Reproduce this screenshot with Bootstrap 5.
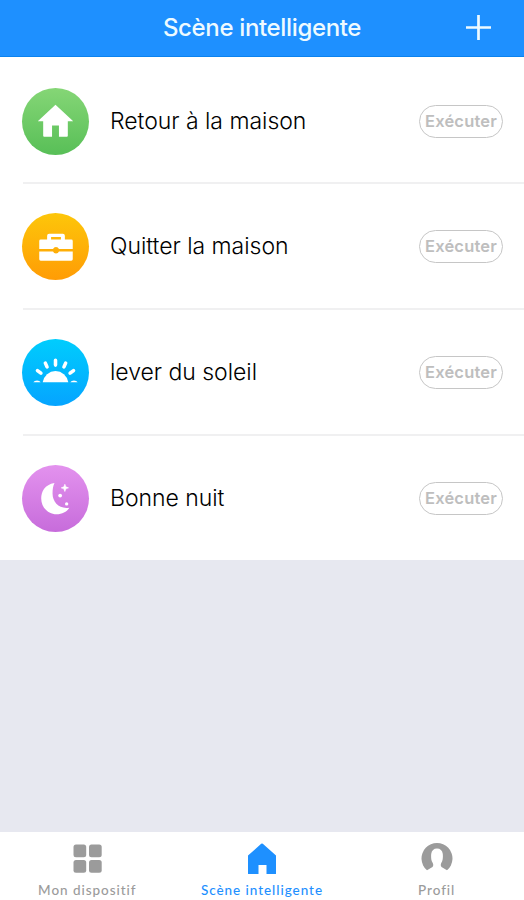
<!DOCTYPE html>
<html lang="fr">
<head>
<meta charset="utf-8">
<meta name="viewport" content="width=device-width, initial-scale=1">
<title>Scène intelligente</title>
<link href="https://cdn.jsdelivr.net/npm/bootstrap@5.3.0/dist/css/bootstrap.min.css" rel="stylesheet">
<style>
body { font-family: Inter, "Liberation Sans", sans-serif; background: #e7e8f0; }
.top-bar { height: 57px; background: #1e90ff; border-bottom: 1px solid #0b82ee; padding: 0 32px; }
.top-title { font-size: 24px; font-weight: 500; letter-spacing: -.35px; color: #eefaff; line-height: 1; }
.add-btn { right: 32px; top: 14px; }
.scene { height: 126px; padding: 3px 21px 0 21px; }
.scene:first-child { height: 125px; padding-top: 4px; }
.scene + .scene { background: linear-gradient(#f0f0f1, #f0f0f1) 23px 0 / 100% 2px no-repeat; }
.disc { width: 67px; height: 67px; margin-top: -1px; margin-left: .5px; }
.scene-name { font-size: 23px; font-weight: 300; color: #000; margin-left: 21.5px; line-height: 1; letter-spacing: -.03px; white-space: nowrap; }
.run-btn { width: 84px; height: 33px; padding: 0; border: 1px solid #c6c6c6; color: #bebebe; font-size: 16.5px; font-weight: 600; letter-spacing: .2px; line-height: 1; }
.disc-home { background: linear-gradient(#85d676, #58bf57); }
.disc-case { background: linear-gradient(#fdc60a, #ff9c05); }
.disc-sun { background: linear-gradient(#00cdfd, #05a4ff); }
.disc-moon { background: linear-gradient(#e392ee, #c76cdb); }
.tab-bar { height: 68px; }
.tab-item { width: 174.66px; padding-top: 10px; color: #9b9b9b; text-decoration: none; }
.tab-item.active { color: #1e90ff; }
.tab-text { font-size: 13.5px; font-weight: 500; line-height: 16px; margin-top: 8px; white-space: nowrap; font-family: Lato, Inter, sans-serif; letter-spacing: .95px; }
</style>
</head>
<body class="d-flex flex-column vh-100 overflow-hidden">
<header class="top-bar position-relative d-flex align-items-center justify-content-center flex-shrink-0">
  <h1 class="top-title m-0">Scène intelligente</h1>
  <button class="add-btn btn p-0 border-0 position-absolute lh-1" aria-label="Ajouter">
    <svg class="d-block" width="27" height="27" viewBox="0 0 27 27" fill="none" stroke="#eefaff" stroke-width="2.7"><path d="M13.500 1v25M1 13.500h25"/></svg>
  </button>
</header>
<main class="bg-white">
  <div class="scene d-flex align-items-center">
    <span class="disc disc-home rounded-circle flex-shrink-0"><svg class="d-block" width="67" height="67" viewBox="0 0 68 68" fill="#fff"><path d="M34 17 16 33.800H21.500V48.500a1 1 0 0 0 1 1H30.500V38h7v11.500h8a1 1 0 0 0 1-1V33.800H52z"/></svg></span>
    <span class="scene-name">Retour à la maison</span>
    <button class="run-btn btn rounded-pill ms-auto">Exécuter</button>
  </div>
  <div class="scene d-flex align-items-center">
    <span class="disc disc-case rounded-circle flex-shrink-0"><svg class="d-block" width="67" height="67" viewBox="0 0 68 68" fill="#fff"><path fill-rule="evenodd" d="M25.500 27v-4q0-2 2-2h14q2 0 2 2v4H50q1.500 0 1.500 1.500V36.500h-14a3.200 3.200 0 0 0-6 0h-14v-8Q17.500 27 19 27zM29.500 24.300V27h10v-2.700z"/><path d="M17.500 39h14a3.200 3.200 0 0 0 6 0h14v8q0 1.500-1.500 1.500H19q-1.500 0-1.500-1.500z"/></svg></span>
    <span class="scene-name">Quitter la maison</span>
    <button class="run-btn btn rounded-pill ms-auto">Exécuter</button>
  </div>
  <div class="scene d-flex align-items-center">
    <span class="disc disc-sun rounded-circle flex-shrink-0"><svg class="d-block" width="67" height="67" viewBox="0 0 68 68" fill="#fff"><path d="M21 43.800a13.200 13.700 0 0 1 26 0z"/><path d="M11.500 43.800a4.200 3 0 0 1 7.500 0zM49 43.800a4.200 3 0 0 1 7.500 0z"/><path d="M34 21.500v5M23.700 24.500l1.700 3.800M44.300 24.500l-1.700 3.800M15.700 32l3.500 2.700M52.300 32l-3.500 2.700" fill="none" stroke="#fff" stroke-width="3.600" stroke-linecap="round"/></svg></span>
    <span class="scene-name">lever du soleil</span>
    <button class="run-btn btn rounded-pill ms-auto">Exécuter</button>
  </div>
  <div class="scene d-flex align-items-center">
    <span class="disc disc-moon rounded-circle flex-shrink-0"><svg class="d-block" width="67" height="67" viewBox="0 0 68 68" fill="#fff"><path d="M33 18.300C23 20 19.500 27 19.500 34c0 9 7 16 15.500 16 6 0 10.500-2.500 13-6.700C38 45 31 38 31 29c0-4.500.5-7.500 2-10.700z"/><path d="m43.500 19.500 1 2.700 2.700 1-2.700 1-1 2.700-1-2.700-2.700-1 2.700-1z" stroke="#fff" stroke-width=".6"/><circle cx="38.700" cy="31" r="1.900"/><circle cx="45.300" cy="39.500" r="1.700"/></svg></span>
    <span class="scene-name">Bonne nuit</span>
    <button class="run-btn btn rounded-pill ms-auto">Exécuter</button>
  </div>
</main>
<nav class="tab-bar bg-white d-flex mt-auto flex-shrink-0">
  <a class="tab-item d-flex flex-column align-items-center" href="#">
    <svg width="32" height="32" viewBox="0 0 32 32" fill="currentColor"><rect x="2.500" y="2.500" width="12.700" height="12.700" rx="2.500"/><rect x="18" y="2.500" width="12.700" height="12.700" rx="2.500"/><rect x="2.500" y="18" width="12.700" height="12.700" rx="2.500"/><rect x="18" y="18" width="12.700" height="12.700" rx="2.500"/></svg>
    <span class="tab-text">Mon dispositif</span>
  </a>
  <a class="tab-item active d-flex flex-column align-items-center" href="#">
    <svg width="32" height="32" viewBox="0 0 32 32" fill="currentColor"><path d="M15.200 1.800q.8-.7 1.600 0L30 13.500v18q0 .5-.5.500H20.500V23h-8v9H2.500q-.5 0-.5-.5v-18z"/></svg>
    <span class="tab-text">Scène intelligente</span>
  </a>
  <a class="tab-item d-flex flex-column align-items-center" href="#">
    <svg width="32" height="32" viewBox="0 0 32 32" fill="currentColor"><path d="M6 28.300A15.500 15.500 0 1 1 26 28.300L20.500 25Q19 23 20.500 20.500C22 18 22 15 21.800 12Q21 6.500 16 6.500T10.200 12C10 15 10 18 11.500 20.500Q13 23 11.500 25z"/></svg>
    <span class="tab-text">Profil</span>
  </a>
</nav>
<script src="https://cdn.jsdelivr.net/npm/bootstrap@5.3.0/dist/js/bootstrap.bundle.min.js"></script>
</body>
</html>
